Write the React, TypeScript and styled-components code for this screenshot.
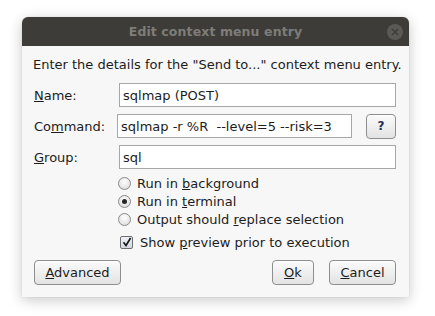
import React from 'react';
import styled, { createGlobalStyle } from 'styled-components';

const GlobalStyle = createGlobalStyle`
  html, body {
    margin: 0;
    padding: 0;
    background: #ffffff;
  }
  body {
    font-family: 'DejaVu Sans', 'Liberation Sans', sans-serif;
    font-size: 13px;
    color: #1c1c1c;
  }
`;

const Page = styled.div`
  width: 435px;
  height: 316px;
  padding: 17px 0 0 22px;
  box-sizing: border-box;
`;

const Window = styled.div`
  width: 387px;
  height: 280px;
  display: flex;
  flex-direction: column;
  border-radius: 6px 6px 0 0;
  background: #f7f7f7;
  box-shadow: 0 3px 14px rgba(0, 0, 0, 0.22), 0 0 1px rgba(0, 0, 0, 0.25);
  overflow: hidden;
`;

const TitleBar = styled.div`
  position: relative;
  height: 29px;
  flex: none;
  background: #3d3c38;
  display: flex;
  align-items: center;
  justify-content: center;
`;

const Title = styled.span`
  font-family: 'DejaVu Sans', sans-serif;
  font-weight: bold;
  font-size: 12.5px;
  color: #7e7d79;
  letter-spacing: 0.1px;
`;

const CloseButton = styled.div`
  position: absolute;
  right: 6px;
  top: 7px;
  width: 16px;
  height: 16px;
  border-radius: 50%;
  background: #5a5955;
  display: flex;
  align-items: center;
  justify-content: center;
`;

const Body = styled.div`
  flex: 1;
  display: flex;
  flex-direction: column;
  padding: 11px 13px 0 11px;
`;

const Intro = styled.div`
  line-height: 16px;
  margin-bottom: 10px;
  white-space: nowrap;
`;

const Row = styled.div`
  display: flex;
  align-items: center;
  height: 24px;
  margin-bottom: 7px;
`;

const Label = styled.label`
  width: 83px;
  flex: none;
  padding-left: 1px;
`;

const TextField = styled.div<{ $indent?: number }>`
  flex: 1;
  height: 24px;
  box-sizing: border-box;
  margin-left: ${p => p.$indent ?? 0}px;
  background: #ffffff;
  border: 1px solid #a7a7a7;
  padding: 0 3px;
  display: flex;
  align-items: center;
  white-space: pre;
  color: #1c1c1c;
`;

const Button = styled.div<{ $width: number }>`
  width: ${p => p.$width}px;
  height: 25px;
  box-sizing: border-box;
  border: 1px solid #8e8e8e;
  border-radius: 4px;
  background: linear-gradient(#fbfbfb, #e3e3e3);
  box-shadow: inset 0 1px 0 #ffffff;
  display: flex;
  align-items: center;
  justify-content: center;
  flex: none;
`;

const HelpButton = styled(Button)`
  margin-left: 14px;
  font-weight: bold;
  font-size: 12px;
  color: #1f2f5a;
`;

const Options = styled.div`
  display: flex;
  flex-direction: column;
  margin-left: 85px;
  margin-top: -2px;
`;

const OptionRow = styled.div<{ $gap?: number }>`
  display: flex;
  align-items: center;
  height: 18px;
  margin-top: ${p => p.$gap ?? 0}px;
`;

const Radio = styled.span<{ $checked?: boolean }>`
  width: 13px;
  height: 13px;
  box-sizing: border-box;
  border-radius: 50%;
  border: 1px solid #8a8a8a;
  background: radial-gradient(circle at 50% 35%, #ffffff, #d6d6d6);
  margin-right: 6px;
  display: flex;
  align-items: center;
  justify-content: center;
  &::after {
    content: '';
    display: ${p => (p.$checked ? 'block' : 'none')};
    width: 5px;
    height: 5px;
    border-radius: 50%;
    background: #262626;
  }
`;

const Checkbox = styled.span`
  width: 13px;
  height: 13px;
  box-sizing: border-box;
  border: 1px solid #6e6e6e;
  border-radius: 2px;
  background: linear-gradient(#f0f2f5, #d3d8df);
  margin: 0 7px 0 2px;
  display: flex;
  align-items: center;
  justify-content: center;
`;

const ButtonBar = styled.div`
  display: flex;
  align-items: center;
  gap: 15px;
  margin-top: 9px;
  padding-left: 1px;
`;

const Spacer = styled.div`
  flex: 1;
`;

export default function App() {
  return (
    <>
      <GlobalStyle />
      <Page>
        <Window>
          <TitleBar>
            <Title>Edit context menu entry</Title>
            <CloseButton>
              <svg width="8" height="8" viewBox="0 0 8 8">
                <path d="M1 1L7 7M7 1L1 7" stroke="#3d3c38" strokeWidth="1.4" />
              </svg>
            </CloseButton>
          </TitleBar>
          <Body>
            <Intro>Enter the details for the "Send to..." context menu entry.</Intro>
            <Row>
              <Label><u>N</u>ame:</Label>
              <TextField $indent={2}>sqlmap (POST)</TextField>
            </Row>
            <Row>
              <Label>Co<u>m</u>mand:</Label>
              <TextField>sqlmap -r %R  --level=5 --risk=3</TextField>
              <HelpButton $width={30}>?</HelpButton>
            </Row>
            <Row>
              <Label><u>G</u>roup:</Label>
              <TextField $indent={2}>sql</TextField>
            </Row>
            <Options>
              <OptionRow>
                <Radio />
                <span>Run in <u>b</u>ackground</span>
              </OptionRow>
              <OptionRow>
                <Radio $checked />
                <span>Run in <u>t</u>erminal</span>
              </OptionRow>
              <OptionRow>
                <Radio />
                <span>Output should <u>r</u>eplace selection</span>
              </OptionRow>
              <OptionRow $gap={5}>
                <Checkbox>
                  <svg width="10" height="10" viewBox="0 0 10 10">
                    <path d="M1.5 5.2L4 8.5L8.6 1" stroke="#1a1a1a" strokeWidth="1.7" fill="none" />
                  </svg>
                </Checkbox>
                <span>Show <u>p</u>review prior to execution</span>
              </OptionRow>
            </Options>
            <ButtonBar>
              <Button $width={87}><span><u>A</u>dvanced</span></Button>
              <Spacer />
              <Button $width={42}><span><u>O</u>k</span></Button>
              <Button $width={67}><span><u>C</u>ancel</span></Button>
            </ButtonBar>
          </Body>
        </Window>
      </Page>
    </>
  );
}
